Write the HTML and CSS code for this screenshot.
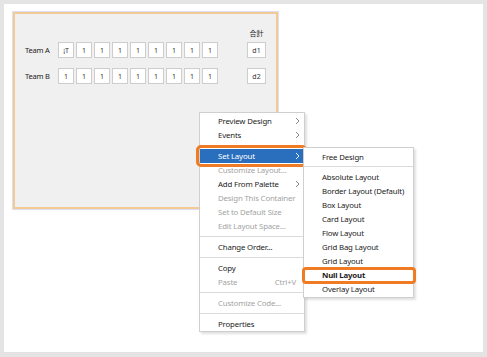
FILE: index.html
```html
<!DOCTYPE html>
<html>
<head>
<meta charset="utf-8">
<link rel="stylesheet" href="styles.css">
</head>
<body>
<div class="frame">
  <div class="panel">
    <div class="row head">
      <span class="lbl"></span>
      <span class="cells"></span>
      <span class="total-h">合計</span>
    </div>
    <div class="row">
      <span class="lbl">Team A</span>
      <div class="cells">
        <span class="cell">¡T</span><span class="cell">1</span><span class="cell">1</span><span class="cell">1</span><span class="cell">1</span><span class="cell">1</span><span class="cell">1</span><span class="cell">1</span><span class="cell">1</span>
      </div>
      <span class="cell total">d1</span>
    </div>
    <div class="row rowb">
      <span class="lbl">Team B</span>
      <div class="cells">
        <span class="cell">1</span><span class="cell">1</span><span class="cell">1</span><span class="cell">1</span><span class="cell">1</span><span class="cell">1</span><span class="cell">1</span><span class="cell">1</span><span class="cell">1</span>
      </div>
      <span class="cell total">d2</span>
    </div>
  </div>

  <div class="menu">
    <div class="item">Preview Design<svg class="chev" width="5" height="8" viewBox="0 0 5 8"><polyline points="1,1 4,4 1,7"/></svg></div>
    <div class="item">Events<svg class="chev" width="5" height="8" viewBox="0 0 5 8"><polyline points="1,1 4,4 1,7"/></svg></div>
    <div class="sep"></div>
    <div class="item active">Set Layout<svg class="chev" width="5" height="8" viewBox="0 0 5 8"><polyline points="1,1 4,4 1,7"/></svg></div>
    <div class="item dis">Customize Layout...</div>
    <div class="item">Add From Palette<svg class="chev" width="5" height="8" viewBox="0 0 5 8"><polyline points="1,1 4,4 1,7"/></svg></div>
    <div class="item dis">Design This Container</div>
    <div class="item dis">Set to Default Size</div>
    <div class="item dis">Edit Layout Space...</div>
    <div class="sep"></div>
    <div class="item">Change Order...</div>
    <div class="sep"></div>
    <div class="item">Copy</div>
    <div class="item dis">Paste<span class="key">Ctrl+V</span></div>
    <div class="sep"></div>
    <div class="item dis">Customize Code...</div>
    <div class="sep"></div>
    <div class="item">Properties</div>
  </div>

  <div class="submenu">
    <div class="item">Free Design</div>
    <div class="sep sub-sep"></div>
    <div class="item">Absolute Layout</div>
    <div class="item">Border Layout (Default)</div>
    <div class="item">Box Layout</div>
    <div class="item">Card Layout</div>
    <div class="item">Flow Layout</div>
    <div class="item">Grid Bag Layout</div>
    <div class="item">Grid Layout</div>
    <div class="item null">Null Layout</div>
    <div class="item">Overlay Layout</div>
  </div>
</div>
</body>
</html>
```

FILE: styles.css
```css
* { box-sizing: border-box; }
html, body { margin: 0; padding: 0; background: #ffffff; }
body {
  font-family: "Noto Sans", "Noto Sans CJK JP", sans-serif;
  color: #1b1b1b;
}
.frame {
  position: relative;
  width: 487px;
  height: 357px;
  border-style: solid;
  border-color: #e4e4e4;
  border-width: 4px 4px 5px 4px;
  background: #ffffff;
  padding: 8px 0 0 9px;
}
.panel {
  width: 265px;
  height: 197px;
  background: #f0f0f0;
  border: 2px solid #f2cb94;
  box-shadow: 0 0 0 1px #dcdff6;
  padding: 13px 0 0 10px;
}
.row {
  display: flex;
  align-items: center;
  height: 16px;
  font-size: 7.5px;
}
.row.head { height: 12px; margin-bottom: 3px; }
.row.rowb { margin-top: 10px; }
.lbl { width: 33px; flex: none; letter-spacing: -0.2px; }
.cells { display: flex; gap: 2px; width: 160px; flex: none; }
.cell {
  width: 16px;
  height: 16px;
  flex: none;
  background: #ffffff;
  border: 1px solid #cdcdcd;
  display: flex;
  align-items: center;
  justify-content: center;
  font-size: 7px;
  color: #333;
}
.total { width: 19px; margin-left: 29px; }
.total-h {
  width: 19px;
  margin-left: 29px;
  text-align: center;
  font-size: 7px;
  font-family: "Noto Sans CJK JP", sans-serif;
}

.menu, .submenu {
  position: absolute;
  background: #ffffff;
  border: 1px solid #cfcfcf;
  box-shadow: 2px 2px 2px rgba(0, 0, 0, 0.12);
  font-size: 7.8px;
  letter-spacing: -0.15px;
}
.menu {
  left: 195px;
  top: 108px;
  width: 106px;
  padding: 1px 0 0 0;
  height: 220px;
}
.submenu {
  left: 299px;
  top: 143px;
  width: 111px;
  padding: 2px 0 1px 0;
  z-index: 2;
}
.item {
  position: relative;
  height: 14px;
  line-height: 14px;
  padding-left: 18px;
  display: flex;
  align-items: center;
  white-space: nowrap;
}
.item.dis { color: #a3a3a3; }
.chev {
  position: absolute;
  right: 4px;
  top: 3px;
  fill: none;
  stroke: #7a7a7a;
  stroke-width: 0.9;
}
.item.active { background: #2a6fbd; color: #ffffff; }
.item.active .chev { stroke: #ffffff; }
.item.active::after {
  content: "";
  position: absolute;
  left: -4px;
  right: -3px;
  top: -4px;
  bottom: -4px;
  border: 3px solid #ef7b24;
  border-radius: 5px;
}
.key { margin-left: auto; padding-right: 8px; }
.sep {
  height: 1px;
  background: #dadada;
  margin: 3px 0 3px 0;
}
.sub-sep { margin: 2px 0 3px 0; }
.item.null { font-weight: bold; }
.item.null::after {
  content: "";
  position: absolute;
  left: -2px;
  right: -3px;
  top: -1px;
  bottom: -2px;
  border: 3px solid #ef7b24;
  border-radius: 4px;
}
```
